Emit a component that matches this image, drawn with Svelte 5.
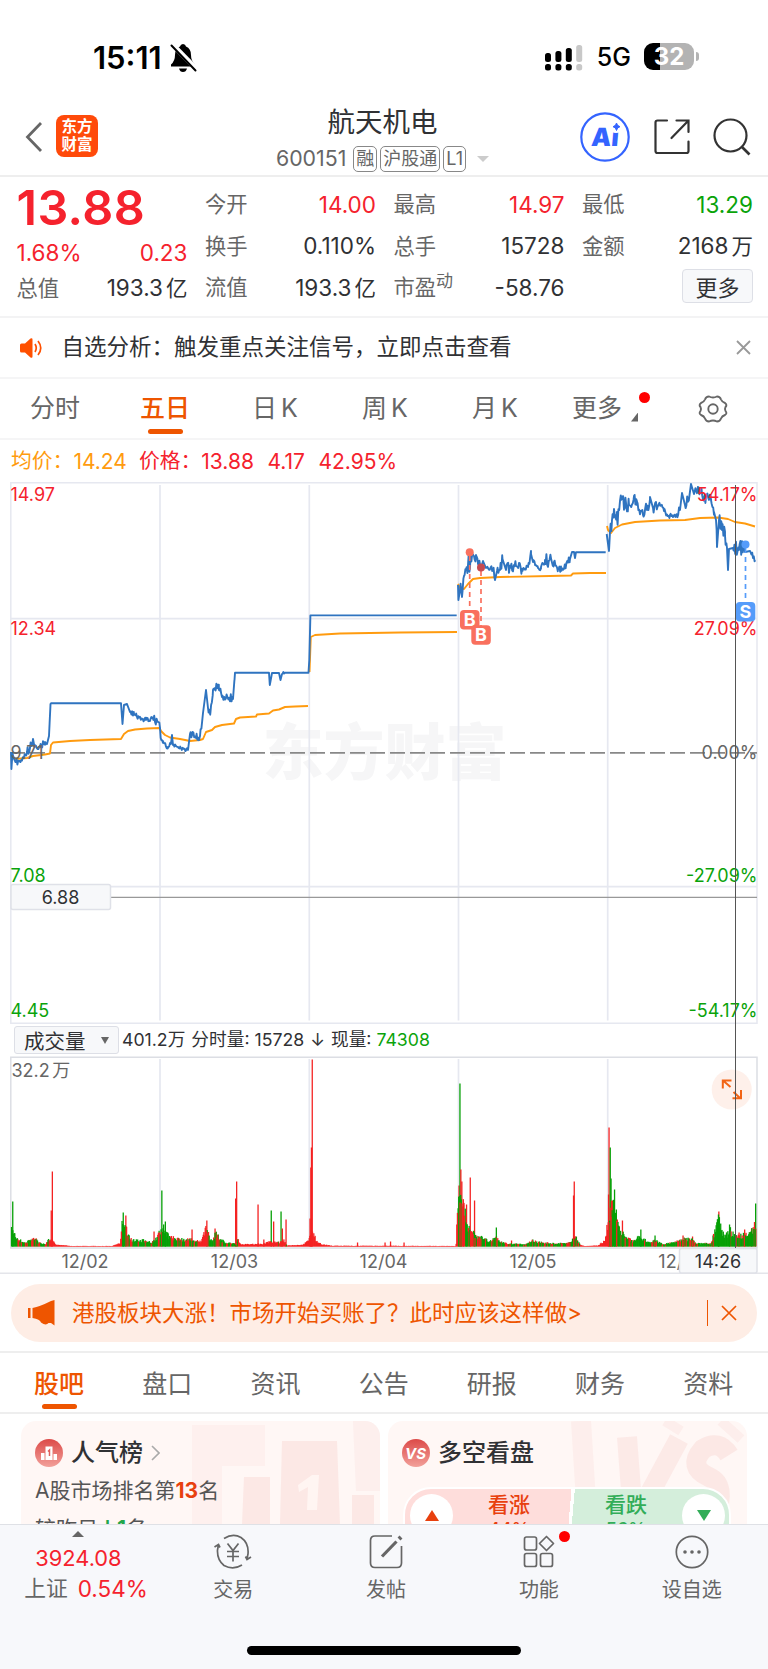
<script>
const quotes = [
  { label: '今开', value: '14.00', tone: 'up' },
  { label: '最高', value: '14.97', tone: 'up' },
  { label: '最低', value: '13.29', tone: 'down' },
  { label: '换手', value: '0.110%' },
  { label: '总手', value: '15728' },
  { label: '金额', value: '2168', unit: '万' },
  { label: '流值', value: '193.3', unit: '亿' },
  { label: '市盈', sup: '动', value: '-58.76' }
]
const periods = ['分时', '五日', '日 K', '周 K', '月 K']
const sections = ['股吧', '盘口', '资讯', '公告', '研报', '财务', '资料']
const dayLines = [160, 309.3, 458.5, 607.7]
const dates = [['12/02', 85], ['12/03', 234.5], ['12/04', 383.5], ['12/05', 533], ['12/08', 682]]

// [x, y, noise]
const prices = [
  [[11, 752], [11.4, 769], [12.5, 753, 2], [16, 762, 3], [19, 761, 2], [24, 758, 3], [27, 752, 4], [30, 748, 4], [33, 739], [34.5, 747, 2], [40, 747, 3], [45, 742, 1.5], [47, 744], [49, 736, 1], [50.5, 704], [51, 703.3], [121, 703.3], [122.5, 724], [124, 705], [127, 704], [130, 712, 2], [134, 714, 2.5], [137, 717, 1.5], [143, 719, 2], [150, 721, 2.5], [152, 718, 3], [158, 722, 1], [159.5, 724],
    [160, 728], [160.7, 738, 2], [163, 741, 2], [167, 747, 1.5], [171, 744], [172, 735], [173, 745, 1], [178, 747, 1.5], [184, 749, 2], [188, 750], [190, 734, 2], [192, 735, 3], [196, 738, 3], [200, 736, 3], [203, 713], [206, 690], [208, 708, 3], [210.5, 712, 3], [213, 690, 3], [215, 688, 5], [219, 690, 5], [222, 697, 3], [227, 696, 3], [233, 699, 2], [234.5, 680], [235, 672.7], [269, 672.7], [269.8, 685], [272, 673], [279, 673], [280.5, 680], [282, 674, 1.5], [285, 672.7], [308.5, 672.7], [309.3, 660], [310.4, 615.4], [456.7, 615.4]],
  [[458, 585], [458.4, 600], [460, 590, 7], [462, 597, 3], [464, 576, 4], [466, 570, 6], [468, 565, 8], [470, 568, 8], [472, 556, 4], [474, 556, 5], [476, 555, 4], [478, 564, 4], [481, 568], [483, 561], [486, 568, 2], [493, 569, 4], [495, 580], [497, 571, 6], [500, 570, 5], [502.5, 559], [506, 570, 5], [510, 568, 5], [516, 566, 4], [522, 569, 2], [528, 567, 3], [531, 554], [533, 562, 2], [538, 568, 5], [541, 567, 4], [545, 560, 6], [549, 561, 5], [554, 562, 3], [558, 569, 3], [561, 569, 3], [565, 566, 3], [570, 559], [572, 552], [574, 552], [575, 558], [576, 552.2], [605.7, 552.2]],
  [[606.7, 534], [609, 551], [610, 532, 6], [612, 520, 6], [614, 509, 5], [617, 518, 7], [621, 500, 7], [624, 505, 6], [629, 505, 5], [634, 496, 4], [637, 505, 4], [643, 515, 6], [647, 510, 5], [650, 497], [653, 508, 4], [658, 506, 4], [664, 511, 3], [670, 515, 2], [676, 516, 3], [680, 510], [682, 493], [685, 505, 4], [689, 499], [691, 484], [694, 494, 5], [700, 492, 5], [706, 497, 5], [711, 500, 3], [714, 512], [716, 520, 5], [717, 547], [719, 520, 6], [722, 530, 7], [725, 535, 5], [727, 548], [728, 570], [729, 549], [733, 548, 6], [739, 550, 6], [743, 545], [745, 552], [750, 551, 2], [755.3, 560]]
]
const averages = [
  [[15, 759], [27, 758], [33, 756], [45, 754.5], [50, 753.5], [51, 745], [53, 742.5], [70, 741], [90, 740], [121, 739], [124, 734], [128, 731], [135, 729.5], [147, 728.5], [159.5, 728], [161, 731], [165, 735], [170, 737.5], [180, 739], [190, 741], [200, 740], [203, 739], [206, 732], [212, 730], [215, 727], [222, 725], [234, 723.5], [236, 719], [240, 717.5], [256, 716.5], [257, 714.5], [269, 713.5], [273, 710.5], [279, 709.5], [285, 707], [295, 706.5], [308, 706]],
  [[309.5, 672], [310.8, 637], [315, 635], [340, 633.5], [400, 632.5], [457, 632]],
  [[458, 584], [460, 588], [464, 589], [468, 584], [473, 579], [480, 578], [500, 577], [550, 576], [571, 575.5], [573, 573.5], [590, 573], [606, 573]],
  [[607, 526], [608, 530], [611, 533], [615, 528], [622, 524.5], [635, 522], [660, 520.5], [685, 520], [700, 518], [718, 517.5], [728, 519], [735, 522], [745, 523.5], [755, 526.5]]
]

// [x, height, share of rising bars]
const envelope = [[11, 17, 0], [14, 13, 0], [17, 7, .2], [21, 6, .6], [26, 3, .5], [31, 8, .6], [35, 10, .2], [38, 4, .3], [45, 2, .8], [49, 7, .8], [54, 6, 1], [56, 1.5, 1], [66, 1, 1], [70, .5, 1], [112, .5, 1], [120, 3, 1], [122, 24, .3], [126, 18, .6], [129, 10, .5], [132, 6, .2], [143, 6, .4], [152, 4, .3], [157, 8, .3], [160, 16, .2], [163, 22, 0], [166, 14, 0], [170, 9, .3], [180, 7, .4], [188, 7, .5], [195, 6, .8], [201, 5, .9], [204, 12, .9], [207, 22, .9], [209, 9, .2], [213, 7, .4], [216, 14, .4], [220, 7, .4], [226, 4, .4], [236, 2.5, .8], [238, 7, 1], [241, 2, 1], [262, 2.5, 1], [270, 5, .7], [280, 4, .6], [284, 6, .7], [287, 1, 1], [303, 1.5, 1], [308, 6, 1], [314, 14, 1], [316, 5, 1], [322, 2, 1], [332, .7, 1], [456, .5, 1], [458, 50, .4], [461, 50, .5], [464, 35, .3], [468, 20, .5], [472, 17, .4], [476, 10, .5], [482, 10, .2], [488, 5, .5], [496, 9, .3], [500, 5, .5], [508, 3, .4], [525, 2, .3], [533, 6, .3], [540, 4, .3], [552, 3, .3], [565, 3, .4], [576, 9, .4], [580, 2, 1], [584, .6, 1], [598, .8, 1], [605, 6, 1], [607, 20, .8], [612, 46, .1], [616, 30, .2], [620, 14, .2], [627, 10, .4], [632, 5, .2], [640, 10, 0], [644, 7, .2], [650, 4, .3], [656, 6, .2], [663, 2, .2], [672, 4, .3], [677, 5, .5], [683, 8, .3], [692, 7, .4], [697, 3, .2], [711, 3, .2], [716, 18, 0], [719, 28, .1], [722, 14, 0], [727, 11, 0], [730, 16, .2], [735, 10, .2], [744, 11, .4], [750, 12, .4], [753, 18, .2], [756, 26, 0]]
const spikes = [[12.7, 45], [51.2, 36, 1], [52.3, 75, 1], [123.2, 34], [125.8, 31, 1], [154, 15, 1], [161.8, 56], [165.3, 25], [192, 17, 1], [206.8, 26, 1], [215, 18, 1], [235.6, 48, 1], [236.6, 65, 1], [258, 42, 1], [263.8, 7, 1], [271.2, 36], [273.6, 25, 1], [281, 35], [282.3, 18, 1], [286, 27, 1], [310, 28, 1], [310.8, 79, 1], [311.4, 99, 1], [312.2, 187, 1], [357.5, 4, 1], [385, 4, 1], [390.5, 5, 1], [404, 4, 1], [459, 61, 1], [459.9, 163], [460.8, 77, 1], [461.8, 65, 1], [463.5, 42], [466.5, 42, 1], [470.2, 69, 1], [474.5, 46, 1], [496.3, 19], [511.5, 6, 1], [573.5, 51, 1], [574.2, 65, 1], [608.5, 52, 1], [609, 119, 1], [610.2, 99], [611, 68], [612.5, 46, 1], [614.5, 57], [616.3, 37], [622.4, 26, 1], [640.8, 17], [655, 11], [683, 11, 1], [692.5, 10, 1], [713, 11], [718.8, 35, 1], [718.4, 32], [729.5, 22], [739, 14, 1], [744.6, 17, 1], [751.5, 18, 1], [755.6, 43]]

function random(seed) {
  const n = Math.sin(seed * 127.1 + 11.7) * 43758.5453
  return n - Math.floor(n)
}

function pricePath(points) {
  const out = []
  points.forEach(([x, y, noise = 0], i) => {
    out.push([x, y])
    const next = points[i + 1]
    if (!next || !noise) return
    for (let s = x + 0.6; s < next[0]; s += 0.8) {
      const t = (s - x) / (next[0] - x)
      out.push([s, Math.max(485, y + (next[1] - y) * t + (random(s) - 0.5) * 2.7 * noise)])
    }
  })
  return out.map(p => p[0].toFixed(1) + ',' + p[1].toFixed(1)).join(' ')
}

function volumeBars() {
  const bars = []
  for (let x = 11.5; x < 756; x += 0.65) {
    let i = 0
    while (i < envelope.length - 2 && envelope[i + 1][0] < x) i++
    const [x0, h0, red] = envelope[i]
    const [x1, h1] = envelope[i + 1]
    const h = (h0 + (h1 - h0) * (x - x0) / (x1 - x0)) * (0.7 + random(x) * 0.55)
    bars.push({ x, h, up: random(x * 3) < red })
  }
  // tall bars first so the short ones stay visible in front
  bars.sort((a, b) => b.h - a.h)
  return spikes.map(([x, h, up]) => ({ x, h, up: !!up })).concat(bars)
}
const bars = volumeBars()
</script>

<div class="app">
  <header class="status">
    <div class="clock">15:11
      <svg width="27" height="28" viewBox="0 0 27 28">
        <path d="M13 0 Q15.500 0 16 2.500 Q21 4.500 21 11 Q21 17 25 20.500 V22.500 H1 V20.500 Q5 17 5 11 Q5 4.500 10 2.500 Q10.500 0 13 0Z M9 24.500 H17 Q16 28 13 28 Q10 28 9 24.500Z" />
        <path d="M2.500 .5 L26 24.500" stroke="#fff" stroke-width="5" />
        <path d="M1.500 1.500 L25.500 26.500" stroke="#000" stroke-width="2" stroke-linecap="round" />
      </svg>
    </div>
    <div class="signal">
      <svg width="39" height="27" viewBox="0 0 39 27">
        {#each [9, 7, 4, 1] as top, i}
        <g fill={i === 3 ? '#c8c8c8' : '#000'}>
          <rect x={i * 10.4} y={top} width="6" height={18 - top} rx="2.500" />
          <rect x={i * 10.4} y="20" width="6" height="6.500" rx="2.500" />
        </g>
        {/each}
      </svg>
      <span>5G</span>
      <div class="battery">32</div>
    </div>
  </header>

  <nav class="top">
    <svg class="back" width="18" height="32" viewBox="0 0 18 32"><path d="M16 2 L2.500 16 L16 30" fill="none" stroke="#666" stroke-width="2.800" /></svg>
    <div class="logo">东方<br>财富</div>
    <div class="title">
      <h1>航天机电</h1>
      <div class="code">600151<i>融</i><i>沪股通</i><i>L1</i><b></b></div>
    </div>
    <div class="actions">
      <svg width="50" height="50" viewBox="0 0 50 50">
        <circle cx="25" cy="25" r="23.700" fill="none" stroke="#3464ff" stroke-width="2.200" />
        <text x="25.500" y="34.500" class="ai" transform="skewX(-5) translate(2 0)">Ai</text>
        <circle cx="36" cy="15.500" r="5.500" fill="#fff" />
        <path d="M36.500 11 Q37 14 40 14.700 Q37 15.400 36.500 18.500 Q36 15.400 33 14.700 Q36 14 36.500 11Z" fill="#3464ff" stroke="#3464ff" />
      </svg>
      <svg width="38" height="38" viewBox="0 0 38 38" fill="none" stroke="#333" stroke-width="2.200" stroke-linecap="round">
        <path d="M14 2.500 H4.500 Q2.500 2.500 2.500 4.500 V33 Q2.500 35 4.500 35 H33.500 Q35.500 35 35.500 33 V23.500 M23.500 2.500 H35.500 V14 M35 3 L18.500 20" />
      </svg>
      <svg width="38" height="38" viewBox="0 0 38 38" fill="none" stroke="#333" stroke-width="2.200">
        <circle cx="17.500" cy="17.500" r="16" /><path d="M28.500 28.500 L36.500 36.500" stroke-width="2.600" />
      </svg>
    </div>
  </nav>

  <section class="quote">
    <div class="last">
      <strong>13.88</strong>
      <div class="row up"><span>1.68%</span><span>0.23</span></div>
      <div class="row"><label>总值</label><span>193.3<em>亿</em></span></div>
    </div>
    <div class="cells">
      {#each quotes as q}
      <div class="row {q.tone || ''}">
        <label>{q.label}{#if q.sup}<sup>{q.sup}</sup>{/if}</label>
        <span>{q.value}{#if q.unit}<em>{q.unit}</em>{/if}</span>
      </div>
      {/each}
      <div class="row end"><button>更多</button></div>
    </div>
  </section>

  <section class="notice">
    <svg width="23" height="20" viewBox="0 0 23 20">
      <path d="M0 7 Q0 5.500 1.500 5.500 H5 L10.500 .5 Q12.500 -.5 12.500 1.500 V18.500 Q12.500 20.500 10.500 19.500 L5 14.500 H1.500 Q0 14.500 0 13Z" fill="#ff5000" />
      <path d="M15 6 Q17.500 10 15 14 M18 3 Q23.500 10 18 17" fill="none" stroke="#ff5000" stroke-width="1.700" />
    </svg>
    <p>自选分析：触发重点关注信号，立即点击查看</p>
    <svg width="15" height="15" viewBox="0 0 15 15"><path d="M1 1 L14 14 M14 1 L1 14" stroke="#999" stroke-width="1.800" /></svg>
  </section>

  <nav class="periods">
    {#each periods as p, i}
    <a class:active={i === 1}>{p}</a>
    {/each}
    <a class="more">更多<b></b><i></i></a>
    <svg width="30" height="28" viewBox="0 0 30 28" fill="none" stroke="#666" stroke-width="1.900">
      <path d="M11 1.500 Q15 3.500 19 1.500 Q22 1.500 23 4.500 Q24 7 27 8 Q29.500 10 27.500 12 Q26.500 14 27.500 16 Q29.500 18.500 27 20 Q24 21 23 23.500 Q22 26.500 19 26.500 Q15 24.500 11 26.500 Q8 26.500 7 23.500 Q6 21 3 20 Q.5 18.500 2.500 16 Q3.500 14 2.500 12 Q.5 10 3 8 Q6 7 7 4.500 Q8 1.500 11 1.500Z" />
      <circle cx="15" cy="14" r="4.700" />
    </svg>
  </nav>

  <div class="legend"><span>均价：</span><span class="v">14.24</span><span class="up">价格：</span><span class="up v">13.88</span><span class="up v">4.17</span><span class="up v">42.95%</span></div>

  <section class="charts">
    <svg width="768" height="542" viewBox="0 482 768 542">
      <text x="384.500" y="775" class="mark">东方财富</text>
      <g stroke="#e6e8f0" stroke-width="1.700" fill="none">
        <path d="M10.800 482.700 H757 V1023.200 H10.800Z" stroke-width="1.500" />
        <path d="M11 618.700 H757 M11 886.700 H757" />
        {#each dayLines as x}<path d="M{x} 485 V1020.500" />{/each}
      </g>
      <path d="M11 752.800 H757" stroke="#888" stroke-width="1.800" stroke-dasharray="15 5" stroke-dashoffset="1" />
      <g fill="none" stroke-width="1.900" stroke-linejoin="round">
        {#each averages as line}<polyline points={pricePath(line)} stroke="#ff9b0f" />{/each}
        {#each prices as line}<polyline points={pricePath(line)} stroke="#2f74c0" />{/each}
      </g>
      <g class="axis">
        <text x="10.500" y="500.700" class="up">14.97</text>
        <text x="10.500" y="634.700" class="up">12.34</text>
        <text x="10.500" y="758.500">9.71</text>
        <text x="10.500" y="881.500" class="down">7.08</text>
        <text x="10.500" y="1016.500" class="down">4.45</text>
        <g text-anchor="end">
          <text x="757.500" y="500.700" class="up">54.17%</text>
          <text x="757.500" y="634.700" class="up">27.09%</text>
          <text x="757.500" y="758.500">0.00%</text>
          <text x="757.500" y="881.500" class="down">-27.09%</text>
          <text x="757.500" y="1016.500" class="down">-54.17%</text>
        </g>
      </g>
      <g fill="none" stroke-width="1.700" stroke-dasharray="5 4">
        <path d="M469.700 556 V610 M481 571 V626" stroke="#f9705e" />
        <path d="M745.500 548 V602" stroke="#559cfa" />
      </g>
      <circle cx="469.700" cy="552.300" r="4" fill="#f9705e" />
      <circle cx="481" cy="567.600" r="4" fill="#c74a50" />
      <circle cx="745.500" cy="544.500" r="4" fill="#559cfa" />
      <g class="badge">
        <rect x="460" y="610" width="19.500" height="19.500" rx="4" fill="#f9705e" /><text x="469.700" y="626">B</text>
        <rect x="471.300" y="625.200" width="19.500" height="19.500" rx="4" fill="#f9705e" /><text x="481" y="641.200">B</text>
        <rect x="735.800" y="602" width="19.500" height="19.500" rx="4" fill="#559cfa" /><text x="745.500" y="618">S</text>
      </g>
      <path d="M111 897.300 H757" stroke="#999" stroke-width="1.300" />
      <rect x="11" y="884.500" width="99.500" height="25" rx="2" fill="#f7f8fa" stroke="#dfe1e8" stroke-width="1.500" />
      <text x="60.500" y="903.500" class="cross">6.88</text>
    </svg>

    <div class="volume-head">
      <button>成交量<b></b></button>
      <span>401.2万</span><span>分时量: 15728</span><span>↓</span><span>现量: <u>74308</u></span>
    </div>

    <svg width="768" height="218" viewBox="0 1056 768 218">
      <g stroke="#e6e8f0" stroke-width="1.700" fill="none">
        <path d="M10.800 1057.300 H757 V1248 H10.800Z" stroke="#dcdee4" stroke-width="1.500" />
        {#each dayLines as x}<path d="M{x} 1059 V1248" />{/each}
      </g>
      <circle cx="731.700" cy="1089.500" r="20" fill="#fef0ea" />
      <path d="M730.500 1087 L723 1080.500 M722.800 1088.500 V1080.500 H731.500 M733.500 1092 L740 1098 M732.500 1098.300 H741 V1090" fill="none" stroke="#f26415" stroke-width="2" />
      {#each bars as b}
      <rect x={b.x - 0.6} y={1246.5 - b.h} width="1.300" height={b.h} fill={b.up ? '#f42222' : '#06a006'} />
      {/each}
      <text x="11.500" y="1076.500" class="axis" word-spacing="-2.500">32.2 万</text>
      <path d="M0 1273.300 H768" stroke="#e4e5ea" stroke-width="1.500" />
      {#each dates as [d, x]}<text {x} y="1267.500" class="date">{d}</text>{/each}
      <rect x="679.500" y="1248.500" width="77.500" height="24.500" rx="2" fill="#f7f8fa" stroke="#dfe1e8" stroke-width="1.500" />
      <text x="718" y="1267.500" class="cross">14:26</text>
    </svg>
    <div class="crosshair"></div>
  </section>

  <section class="banner">
    <svg width="28" height="26" viewBox="0 0 28 26" fill="#ee5500">
      <path d="M0 8 H2.500 V18 H0Z M4.500 8 Q12 6.500 23 1 L26.500 0 V25.500 L23 23 H20.500 Q18 26 13 22.500 Q12 19 4.500 18Z" />
    </svg>
    <p>港股板块大涨！市场开始买账了？此时应该这样做&gt;</p>
    <hr>
    <svg width="16" height="16" viewBox="0 0 16 16"><path d="M1 1 L15 15 M15 1 L1 15" stroke="#ee5500" stroke-width="1.700" /></svg>
  </section>

  <nav class="sections">
    {#each sections as s, i}
    <a class:active={i === 0}>{s}</a>
    {/each}
  </nav>

  <section class="cards">
    <div class="card">
      <svg class="art" width="210" height="104" viewBox="0 0 210 104" fill="#f9d9d6">
        <path d="M22 4 H95 V45 H52 V104 H22Z" opacity=".22" />
        <path d="M112 20 H167 L170 104 H110Z M74 56 H100 V104 H72Z M182 74 H204 V104 H182Z" opacity=".5" />
        <path d="M183 0 H210 V70 H186Z" opacity=".25" />
        <path d="M128 64 L142 54 H149 L147 89 H137 L138 66 L129 71Z" fill="#fff5f2" />
      </svg>
      <h2>
        <svg width="28" height="28" viewBox="0 0 28 28"><circle cx="14" cy="14" r="14" fill="url(#g)" />
          <defs><linearGradient id="g" x2="0" y2="1"><stop stop-color="#dc4a48" /><stop offset="1" stop-color="#f2a09a" /></linearGradient></defs>
          <path d="M6 14 H9.500 V21 H6Z M10.500 7.500 H17.500 V21 H10.500Z M18.500 15 H22 V21 H18.500Z" fill="#fff" /><path d="M13 12.500 L14.500 11 V17" fill="none" stroke="#e0605c" stroke-width="1.500" />
        </svg>人气榜
        <svg width="9" height="16" viewBox="0 0 9 16"><path d="M1 1 L8 8 L1 15" fill="none" stroke="#aaa" stroke-width="1.600" /></svg>
      </h2>
      <p>A股市场排名第<b>13</b>名</p>
      <p>较昨日<b class="fall">↓1</b>名</p>
    </div>
    <div class="card">
      <svg class="art" width="190" height="104" viewBox="0 0 190 104" fill="none" stroke="#f9d9d6">
        <path d="M24 0 L30 96" stroke-width="20" opacity=".3" />
        <path d="M70 16 L76 96 M122 18 L80 96" stroke-width="20" opacity=".45" />
        <path d="M172 34 Q162 18 146 28 Q130 46 152 56 Q170 64 158 96" stroke-width="20" opacity=".5" />
        <path d="M108 0 L124 10 M164 0 L184 18" stroke-width="10" opacity=".3" />
      </svg>
      <h2>
        <svg width="28" height="28" viewBox="0 0 28 28"><circle cx="14" cy="14" r="14" fill="url(#g)" /><text x="13.500" y="20" class="vs">VS</text></svg>多空看盘
      </h2>
      <div class="vote">
        <div class="bull"><i><b></b></i><span>看涨<small>44%</small></span></div>
        <div class="bear"><span>看跌<small>56%</small></span><i><b></b></i></div>
      </div>
    </div>
  </section>

  <footer>
    <div class="tools">
      <div class="index"><b></b><span class="up">3924.08</span><div>上证<span class="up">0.54%</span></div></div>
      <div class="tool">
        <svg width="40" height="36" viewBox="0 0 40 36">
          <path d="M11 4.500 Q20 -1 28 3.500 Q36 9 35 20 L34 25 M38 23 L34 25.500 L32.500 22.500 M29 31 Q20 36.500 11 31.500 Q4 26 4.500 16 L5.500 10.500 M1.500 13 L5.500 10.500 L7 13.500" />
          <path d="M14.500 9.500 L20 16.500 L25.500 9.500 M20 16.500 V27.500 M14 17.500 H26 M14 22.500 H26" />
        </svg>交易
      </div>
      <div class="tool">
        <svg width="40" height="36" viewBox="0 0 40 36">
          <path d="M26 2 H9 Q4.500 2 4.500 6.500 V29 Q4.500 33.500 9 33.500 H31 Q35.500 33.500 35.500 29 V12" /><path d="M16 22.500 L30.500 7.500" stroke-width="3.200" /><path d="M33 5 L35 3" stroke-width="4" />
        </svg>发帖
      </div>
      <div class="tool">
        <svg width="40" height="36" viewBox="0 0 40 36">
          <rect x="5.500" y="3" width="12" height="13" rx="2" /><rect x="5.500" y="19.500" width="12" height="13" rx="2" /><rect x="21.500" y="19.500" width="12" height="13" rx="2" />
          <path d="M27.500 2.500 L34.500 9.500 L27.500 16.500 L20.500 9.500Z" stroke-linejoin="round" />
        </svg>功能<i></i>
      </div>
      <div class="tool">
        <svg width="40" height="36" viewBox="0 0 40 36">
          <circle cx="20" cy="18" r="15.700" /><g fill="#666" stroke="none"><circle cx="13" cy="18" r="1.800" /><circle cx="20" cy="18" r="1.800" /><circle cx="27" cy="18" r="1.800" /></g>
        </svg>设自选
      </div>
    </div>
    <div class="home"></div>
  </footer>
</div>

<style>
:global(body) {
  background: #fff;
}
.app {
  width: 768px;
  height: 1669px;
  overflow: hidden;
  display: flex;
  flex-direction: column;
  box-sizing: border-box;
  font-family: Inter, "Noto Sans CJK SC", sans-serif;
  color: #303134;
  line-height: 1;
}
.app * {
  box-sizing: border-box;
}
h1, h2, p, sup {
  margin: 0;
  font-weight: 400;
}
i, em {
  font-style: normal;
}
svg, header, section, nav {
  flex: none;
}
.up { color: #f5222d; fill: #f5222d; }
.down { color: #0aa30a; fill: #0aa30a; }

.status {
  height: 97px;
  padding: 18px 74px 0 93px;
  display: flex;
  justify-content: space-between;
  align-items: center;
  color: #000;
}
.clock {
  display: flex;
  align-items: center;
  gap: 8px;
  font-size: 31px;
  font-weight: 600;
}
.signal {
  display: flex;
  align-items: center;
  gap: 13px;
  font-size: 25px;
  font-weight: 500;
}
.signal svg {
  margin-top: -1px;
}
.battery {
  width: 50px;
  height: 27px;
  margin-top: -2px;
  border-radius: 9px;
  background: linear-gradient(90deg, #000 32%, #b3b3b3 32%);
  color: #fff;
  font-weight: 700;
  font-size: 24px;
  line-height: 27px;
  text-align: center;
  position: relative;
}
.battery::after {
  content: "";
  position: absolute;
  right: -5px;
  top: 9px;
  width: 3px;
  height: 9px;
  border-radius: 0 3px 3px 0;
  background: #b3b3b3;
}

.top {
  height: 80px;
  border-bottom: 2px solid #eee;
  display: grid;
  grid-template-columns: 31px 260px 1fr 172px;
  padding: 0 16px 0 25px;
}
.back {
  margin-top: 24px;
}
.logo {
  margin-top: 18px;
  width: 42px;
  height: 42px;
  border-radius: 8px;
  background: #ff4a0a;
  color: #fff;
  font-size: 15.500px;
  font-weight: 700;
  line-height: 18px;
  padding-top: 3px;
  text-align: center;
}
.title {
  padding-top: 11px;
  margin-left: -131px;
  text-align: center;
}
.title h1 {
  font-size: 27.500px;
  line-height: 28px;
}
.code {
  display: flex;
  justify-content: center;
  align-items: center;
  gap: 3px;
  height: 26px;
  margin-top: 10px;
  font-size: 21.300px;
  color: #666;
}
.code i {
  border: 1.500px solid #888;
  border-radius: 5px;
  height: 26px;
  line-height: 23px;
  padding: 0 2px;
  font-size: 18px;
}
.code i:first-of-type {
  margin-left: 4px;
}
.code b {
  border: 6.500px solid transparent;
  border-top-color: #ccc;
  border-bottom: 0;
  margin-left: 8px;
}
.actions {
  display: flex;
  align-items: center;
  gap: 22.500px;
  padding-top: 1px;
}
.ai {
  font-size: 25px;
  font-weight: 900;
  fill: #3464ff;
  text-anchor: middle;
}

.quote {
  height: 141px;
  border-bottom: 2px solid #f3f3f4;
  padding: 7px 15px 0 16.500px;
  display: flex;
  gap: 17.500px;
  font-size: 22.500px;
}
.last {
  width: 171px;
}
.last strong {
  display: block;
  font-size: 48.500px;
  font-weight: 600;
  line-height: 48px;
  height: 50px;
  letter-spacing: .4px;
  color: #f5222d;
}
.last .row {
  height: 33px;
}
.last .row.up {
  height: 38px;
}
.cells {
  flex: 1;
  display: grid;
  grid-template-columns: repeat(3, 1fr);
  grid-auto-rows: 41.500px;
  column-gap: 17.500px;
}
.row {
  display: flex;
  justify-content: space-between;
  align-items: center;
}
.row em {
  margin-left: 3px;
  font-size: 21.500px;
}
.row label {
  color: #666;
  font-size: 21.300px;
}
.row sup {
  font-size: 17px;
  vertical-align: 8px;
  line-height: 0;
}
.row.end {
  justify-content: flex-end;
}
.row button {
  width: 71px;
  height: 34px;
  margin-top: -3px;
  padding: 0;
  border: 1.500px solid #dddfe6;
  border-radius: 4px;
  background: #f7f8fa;
  font: 22px "Noto Sans CJK SC", sans-serif;
  line-height: 28px;
  color: #303134;
}

.notice {
  height: 61px;
  border-bottom: 2px solid #f5f5f6;
  display: flex;
  align-items: center;
  padding: 0 17.500px 0 20px;
}
.notice p {
  flex: 1;
  padding-left: 18.500px;
  font-size: 22.500px;
}

.periods, .sections {
  display: flex;
  align-items: center;
  font-size: 25px;
  color: #666;
}
.periods {
  height: 61px;
  border-bottom: 2px solid #f5f5f6;
}
.periods a, .sections a {
  width: 110px;
  height: 100%;
  display: flex;
  align-items: center;
  justify-content: center;
  white-space: pre;
  position: relative;
}
.periods a {
  word-spacing: -3px;
}
.active {
  color: #ee5500;
  font-weight: 500;
}
.active::after {
  content: "";
  position: absolute;
  bottom: 4px;
  width: 35px;
  height: 5.500px;
  border-radius: 3px;
  background: #ee5500;
}
.more b {
  width: 7px;
  height: 9px;
  background: #666;
  clip-path: polygon(100% 0, 100% 100%, 0 100%);
  margin: 17px 0 0 9px;
}
.more i, .tool i {
  position: absolute;
  width: 11px;
  height: 11px;
  border-radius: 50%;
  background: #f00;
}
.more i {
  left: 89px;
  top: 13px;
}
.periods svg {
  margin-left: 38px;
}

.legend {
  height: 42px;
  display: flex;
  align-items: center;
  padding-left: 11px;
  font-size: 20.800px;
  color: #ff9b0f;
}
.legend .v {
  margin-right: 12px;
  font-size: 21px;
}
.legend .up.v {
  margin-right: 13.500px;
}

.charts {
  position: relative;
  height: 792px;
}
.charts svg {
  display: block;
}
.mark {
  font: 900 61px "Noto Sans CJK SC", sans-serif;
  fill: #f6f6f7;
  text-anchor: middle;
}
.axis {
  font-size: 18px;
  fill: #666;
}
.cross, .date {
  font-size: 18px;
  fill: #303134;
  text-anchor: middle;
}
.date {
  fill: #666;
}
.badge text {
  font-size: 18px;
  font-weight: 700;
  fill: #fff;
  text-anchor: middle;
}
.crosshair {
  position: absolute;
  left: 735px;
  top: 3px;
  width: 1px;
  height: 763px;
  background: #555;
}
.volume-head {
  height: 32px;
  display: flex;
  align-items: center;
  padding-left: 14px;
  gap: 6px;
  font-size: 17.700px;
}
.volume-head button {
  width: 105px;
  height: 28px;
  margin-right: -3px;
  padding: 0 9px;
  display: flex;
  align-items: center;
  justify-content: space-between;
  border: 1.500px solid #dddfe6;
  border-radius: 3px;
  background: #f7f8fa;
  font: 20.500px "Noto Sans CJK SC", sans-serif;
  line-height: 24px;
  color: #303134;
}
.volume-head b {
  border: 4.500px solid transparent;
  border-top: 7px solid #666;
  border-bottom: 0;
}
.volume-head u {
  color: #0aa30a;
  text-decoration: none;
}

.banner {
  height: 58px;
  margin: 10px 11px 9px;
  border-radius: 29px;
  background: #feede5;
  color: #ee5500;
  display: flex;
  align-items: center;
  padding: 0 20px 0 17px;
}
.banner p {
  flex: 1;
  padding-left: 16px;
  font-size: 22.500px;
}
.banner hr {
  width: 1.500px;
  height: 26px;
  margin: 0 13px 0 0;
  border: 0;
  background: #ee5500;
}

.sections {
  height: 63px;
  border-top: 2px solid #eee;
  border-bottom: 2px solid #eee;
  padding: 0 5px;
}
.sections a {
  width: 108.200px;
  padding-top: 3px;
}
.sections .active::after {
  bottom: 3px;
}

.cards {
  height: 110px;
  overflow: hidden;
  padding: 7px 21px 0;
  display: grid;
  grid-template-columns: 1fr 1fr;
  gap: 8px;
}
.card {
  height: 170px;
  border-radius: 15px;
  background: #fff7f5;
  padding: 17px 14px;
  position: relative;
  overflow: hidden;
}
.art {
  position: absolute;
  right: 0;
  top: 0;
}
.card h2 {
  display: flex;
  align-items: center;
  gap: 8px;
  height: 29px;
  margin-bottom: 13px;
  font-size: 24px;
  font-weight: 500;
  position: relative;
}
.card p {
  font-size: 21px;
  line-height: 22px;
  margin-bottom: 16px;
  color: #555;
  position: relative;
}
.card p b {
  color: #e8400e;
  font-weight: 700;
}
.card p .fall {
  color: #22a64c;
}
.vs {
  font: italic 700 15px Inter, sans-serif;
  fill: #fff;
  text-anchor: middle;
}
.vote {
  position: relative;
  margin: 20px 2px 0 1px;
  height: 70px;
  border: 2px solid #fff;
  border-radius: 28px;
  overflow: hidden;
  background: linear-gradient(95deg, #fedddb 50.500%, #fff 50.500%, #fff 51.500%, #d4eedb 51.500%);
  display: flex;
  justify-content: space-between;
  padding: 5px 4px 0 5px;
  font-size: 21px;
  font-weight: 500;
}
.bull, .bear {
  display: flex;
  gap: 35px;
}
.bull { color: #e8400e; }
.bear { color: #32ad58; }
.vote span {
  display: flex;
  flex-direction: column;
  align-items: center;
}
.vote small {
  font-size: 18px;
  margin-top: 6px;
}
.vote i {
  width: 43px;
  height: 43px;
  border-radius: 50%;
  background: #fff;
  display: grid;
  place-items: center;
}
.vote b {
  border: 7px solid transparent;
  border-bottom: 11px solid #e8400e;
  border-top: 0;
}
.vote .bear b {
  border: 7px solid transparent;
  border-top: 11px solid #32ad58;
  border-bottom: 0;
}

footer {
  flex: 1;
  background: #f7f8fb;
  border-top: 1.500px solid #dfe1e6;
  color: #666;
}
.tools {
  display: flex;
  height: 121px;
}
.index {
  width: 157px;
  display: flex;
  flex-direction: column;
  align-items: center;
  padding-top: 6px;
  font-size: 21.800px;
}
.index b {
  border: 6px solid transparent;
  border-bottom: 6px solid #666;
  border-top: 0;
  margin-bottom: 11px;
}
.index div {
  margin: 8px 0 0 15px;
  display: flex;
  gap: 10px;
}
.index div span {
  font-size: 22.500px;
}
.tool {
  width: 152.800px;
  display: flex;
  flex-direction: column;
  align-items: center;
  gap: 10px;
  padding-top: 9px;
  font-size: 20px;
  position: relative;
}
.tool svg {
  fill: none;
  stroke: #666;
  stroke-width: 1.700;
}
.tool i {
  left: 96px;
  top: 6px;
}
.home {
  width: 274px;
  height: 9px;
  margin: 0 auto;
  border-radius: 5px;
  background: #000;
}
</style>
